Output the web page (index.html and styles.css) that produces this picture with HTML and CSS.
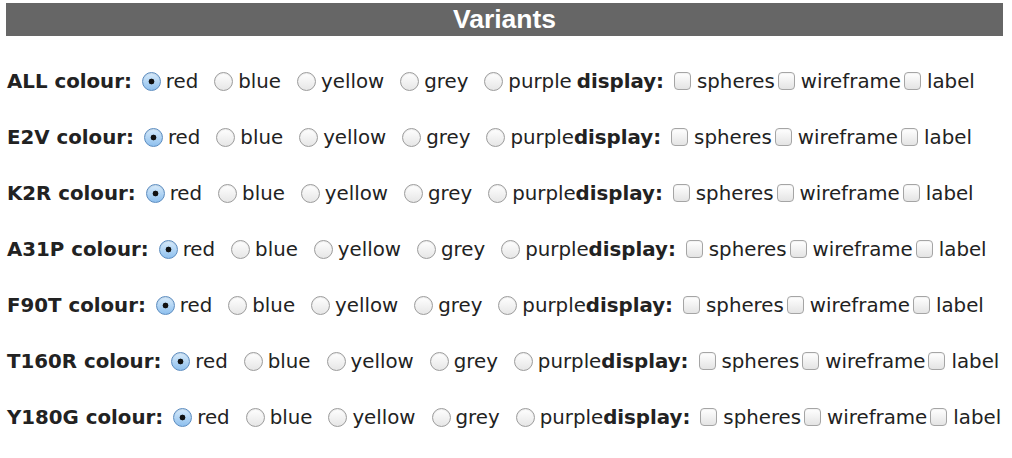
FILE: index.html
```html
<!DOCTYPE html>
<html lang="en">

<head>
  <meta charset="UTF-8">
  <title>Variants</title>
  <link rel="stylesheet" href="styles.css">
</head>

<body>
  <h2 class="title">Variants</h2>

  <div class="variants">
    <div class="row">
      <b class="name">ALL colour:</b>
      <label class="opt"><input type="radio" name="c_all" checked>red</label>
      <label class="opt"><input type="radio" name="c_all">blue</label>
      <label class="opt"><input type="radio" name="c_all">yellow</label>
      <label class="opt"><input type="radio" name="c_all">grey</label>
      <label class="opt last spaced"><input type="radio" name="c_all">purple</label>
      <b class="disp">display:</b>
      <label class="chk"><input type="checkbox">spheres</label>
      <label class="chk"><input type="checkbox">wireframe</label>
      <label class="chk"><input type="checkbox">label</label>
    </div>

    <div class="row">
      <b class="name">E2V colour:</b>
      <label class="opt"><input type="radio" name="c_e2v" checked>red</label>
      <label class="opt"><input type="radio" name="c_e2v">blue</label>
      <label class="opt"><input type="radio" name="c_e2v">yellow</label>
      <label class="opt"><input type="radio" name="c_e2v">grey</label>
      <label class="opt last"><input type="radio" name="c_e2v">purple</label>
      <b class="disp">display:</b>
      <label class="chk"><input type="checkbox">spheres</label>
      <label class="chk"><input type="checkbox">wireframe</label>
      <label class="chk"><input type="checkbox">label</label>
    </div>

    <div class="row">
      <b class="name">K2R colour:</b>
      <label class="opt"><input type="radio" name="c_k2r" checked>red</label>
      <label class="opt"><input type="radio" name="c_k2r">blue</label>
      <label class="opt"><input type="radio" name="c_k2r">yellow</label>
      <label class="opt"><input type="radio" name="c_k2r">grey</label>
      <label class="opt last"><input type="radio" name="c_k2r">purple</label>
      <b class="disp">display:</b>
      <label class="chk"><input type="checkbox">spheres</label>
      <label class="chk"><input type="checkbox">wireframe</label>
      <label class="chk"><input type="checkbox">label</label>
    </div>

    <div class="row">
      <b class="name">A31P colour:</b>
      <label class="opt"><input type="radio" name="c_a31p" checked>red</label>
      <label class="opt"><input type="radio" name="c_a31p">blue</label>
      <label class="opt"><input type="radio" name="c_a31p">yellow</label>
      <label class="opt"><input type="radio" name="c_a31p">grey</label>
      <label class="opt last"><input type="radio" name="c_a31p">purple</label>
      <b class="disp">display:</b>
      <label class="chk"><input type="checkbox">spheres</label>
      <label class="chk"><input type="checkbox">wireframe</label>
      <label class="chk"><input type="checkbox">label</label>
    </div>

    <div class="row">
      <b class="name">F90T colour:</b>
      <label class="opt"><input type="radio" name="c_f90t" checked>red</label>
      <label class="opt"><input type="radio" name="c_f90t">blue</label>
      <label class="opt"><input type="radio" name="c_f90t">yellow</label>
      <label class="opt"><input type="radio" name="c_f90t">grey</label>
      <label class="opt last"><input type="radio" name="c_f90t">purple</label>
      <b class="disp">display:</b>
      <label class="chk"><input type="checkbox">spheres</label>
      <label class="chk"><input type="checkbox">wireframe</label>
      <label class="chk"><input type="checkbox">label</label>
    </div>

    <div class="row">
      <b class="name">T160R colour:</b>
      <label class="opt"><input type="radio" name="c_t160r" checked>red</label>
      <label class="opt"><input type="radio" name="c_t160r">blue</label>
      <label class="opt"><input type="radio" name="c_t160r">yellow</label>
      <label class="opt"><input type="radio" name="c_t160r">grey</label>
      <label class="opt last"><input type="radio" name="c_t160r">purple</label>
      <b class="disp">display:</b>
      <label class="chk"><input type="checkbox">spheres</label>
      <label class="chk"><input type="checkbox">wireframe</label>
      <label class="chk"><input type="checkbox">label</label>
    </div>

    <div class="row">
      <b class="name">Y180G colour:</b>
      <label class="opt"><input type="radio" name="c_y180g" checked>red</label>
      <label class="opt"><input type="radio" name="c_y180g">blue</label>
      <label class="opt"><input type="radio" name="c_y180g">yellow</label>
      <label class="opt"><input type="radio" name="c_y180g">grey</label>
      <label class="opt last"><input type="radio" name="c_y180g">purple</label>
      <b class="disp">display:</b>
      <label class="chk"><input type="checkbox">spheres</label>
      <label class="chk"><input type="checkbox">wireframe</label>
      <label class="chk"><input type="checkbox">label</label>
    </div>
  </div>
</body>

</html>
```

FILE: styles.css
```css
body {
  margin: 3px 9px 0 6px;
  font-family: "DejaVu Sans", Verdana, sans-serif;
  font-size: 19.8px;
  color: #222;
  background-color: #fff;
}

.title {
  margin: 0 0 17px 0;
  height: 33px;
  line-height: 33px;
  background-color: #666;
  color: #fff;
  text-align: center;
  font-family: "Liberation Sans", Arial, sans-serif;
  font-size: 26.5px;
  font-weight: bold;
}

.variants {
  display: flex;
  flex-direction: column;
}

.row {
  display: flex;
  align-items: center;
  height: 56px;
  padding-left: 1px;
  white-space: nowrap;
}

.name {
  margin-right: 10px;
}

label {
  display: flex;
  align-items: center;
}

.opt {
  margin-right: 16px;
}

.opt.last {
  margin-right: 0;
}

.opt.spaced {
  margin-right: 5px;
}

.chk {
  margin-right: 3px;
}

.disp {
  margin-right: 10px;
}

input[type="radio"] {
  appearance: none;
  -webkit-appearance: none;
  flex-shrink: 0;
  box-sizing: border-box;
  width: 19px;
  height: 19px;
  margin: 0 5px 0 0;
  border: 1px solid #9c9c9c;
  border-radius: 50%;
  background: linear-gradient(#ffffff, #e6e6e6);
  box-shadow: inset 0 1px 1px rgba(0, 0, 0, 0.08);
}

input[type="radio"]:checked {
  border-color: #5b8cc0;
  background: radial-gradient(circle at 50% 50%, #111 0, #111 2.6px, transparent 3.2px),
    linear-gradient(#d8ebfb, #8ec0ee);
}

input[type="checkbox"] {
  appearance: none;
  -webkit-appearance: none;
  flex-shrink: 0;
  box-sizing: border-box;
  width: 17px;
  height: 18px;
  margin: 0 6px 0 0;
  border: 1px solid #a5a5a5;
  border-radius: 4px;
  background: linear-gradient(#ffffff, #e4e4e4);
  box-shadow: inset 0 1px 1px rgba(0, 0, 0, 0.05);
}
```
